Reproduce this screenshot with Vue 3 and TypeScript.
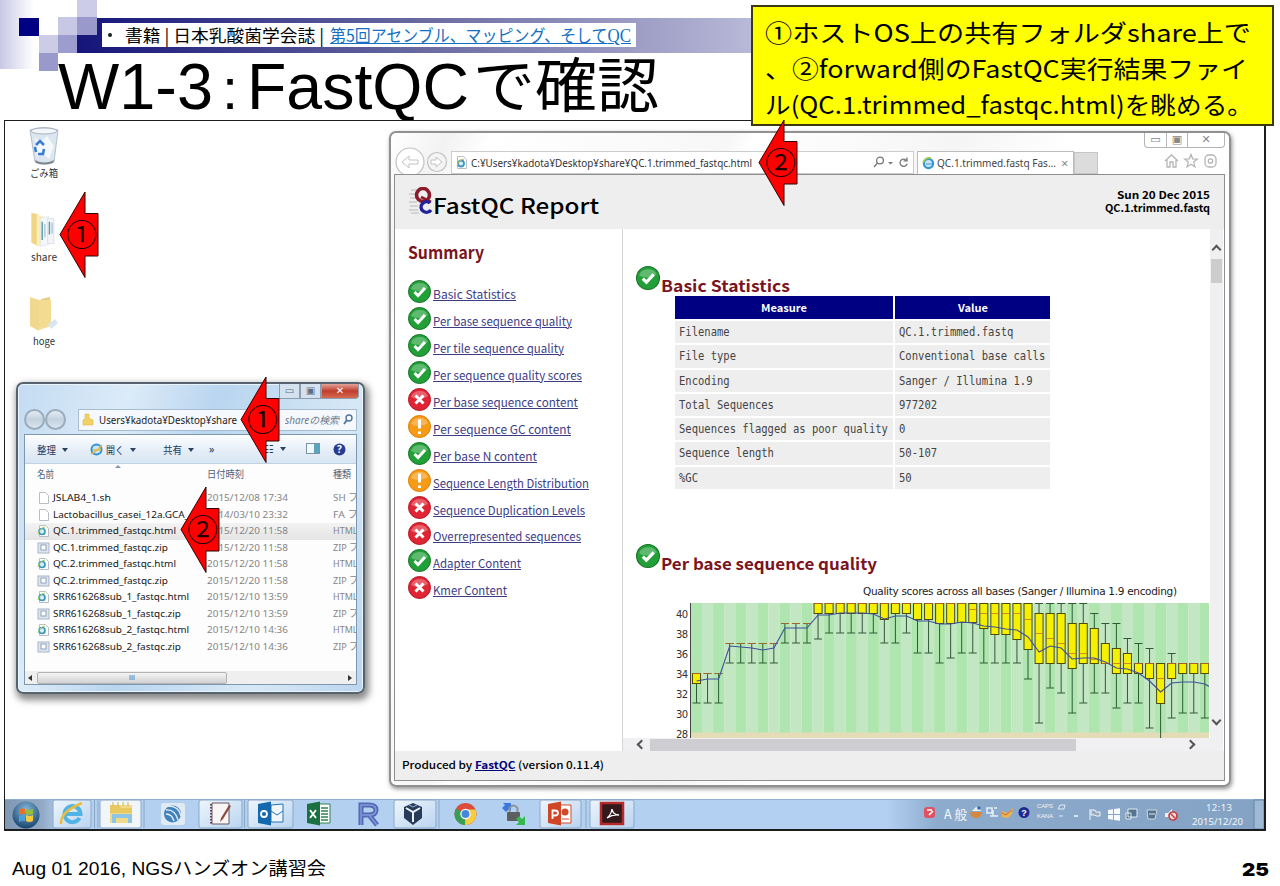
<script setup lang="ts">
import type { Directive } from 'vue'

// Stretches or condenses a line of text to the given width in pixels.
const vFit: Directive<HTMLElement, number> = {
  mounted(el, binding) {
    const natural = el.getBoundingClientRect().width
    if (!natural) return
    el.style.transform = `scaleX(${binding.value / natural})`
    el.style.marginRight = `${binding.value - natural}px`
  },
}

type Status = 'pass' | 'fail' | 'warn'
interface Check { label: string; status: Status; width: number }
interface FileRow { name: string; kind: 'doc' | 'html' | 'zip'; date: string; type: string; width: number }

const checks: Check[] = [
  { label: 'Basic Statistics', status: 'pass', width: 83 },
  { label: 'Per base sequence quality', status: 'pass', width: 139 },
  { label: 'Per tile sequence quality', status: 'pass', width: 131 },
  { label: 'Per sequence quality scores', status: 'pass', width: 149 },
  { label: 'Per base sequence content', status: 'fail', width: 145 },
  { label: 'Per sequence GC content', status: 'warn', width: 138 },
  { label: 'Per base N content', status: 'pass', width: 104 },
  { label: 'Sequence Length Distribution', status: 'warn', width: 156 },
  { label: 'Sequence Duplication Levels', status: 'fail', width: 152 },
  { label: 'Overrepresented sequences', status: 'fail', width: 148 },
  { label: 'Adapter Content', status: 'pass', width: 88 },
  { label: 'Kmer Content', status: 'fail', width: 74 },
]

const stats: [string, string][] = [
  ['Filename', 'QC.1.trimmed.fastq'],
  ['File type', 'Conventional base calls'],
  ['Encoding', 'Sanger / Illumina 1.9'],
  ['Total Sequences', '977202'],
  ['Sequences flagged as poor quality', '0'],
  ['Sequence length', '50-107'],
  ['%GC', '50'],
]

const files: FileRow[] = [
  { name: 'JSLAB4_1.sh', kind: 'doc', date: '2015/12/08 17:34', type: 'SH フ', width: 58 },
  { name: 'Lactobacillus_casei_12a.GCA_', kind: 'doc', date: '2014/03/10 23:32', type: 'FA フ', width: 136 },
  { name: 'QC.1.trimmed_fastqc.html', kind: 'html', date: '2015/12/20 11:58', type: 'HTML', width: 123 },
  { name: 'QC.1.trimmed_fastqc.zip', kind: 'zip', date: '2015/12/20 11:58', type: 'ZIP フ', width: 115 },
  { name: 'QC.2.trimmed_fastqc.html', kind: 'html', date: '2015/12/20 11:58', type: 'HTML', width: 123 },
  { name: 'QC.2.trimmed_fastqc.zip', kind: 'zip', date: '2015/12/20 11:58', type: 'ZIP フ', width: 115 },
  { name: 'SRR616268sub_1_fastqc.html', kind: 'html', date: '2015/12/10 13:59', type: 'HTML', width: 136 },
  { name: 'SRR616268sub_1_fastqc.zip', kind: 'zip', date: '2015/12/10 13:59', type: 'ZIP フ', width: 128 },
  { name: 'SRR616268sub_2_fastqc.html', kind: 'html', date: '2015/12/10 14:36', type: 'HTML', width: 136 },
  { name: 'SRR616268sub_2_fastqc.zip', kind: 'zip', date: '2015/12/10 14:36', type: 'ZIP フ', width: 128 },
]

// upper whisker, q3, q1, lower whisker, mean, median
const raw: number[][] = [
  [34, 34, 33, 31, 33.2, 34], [34, 34, 34, 31, 33.4, 34], [34, 34, 34, 31, 33.4, 34],
  [37, 37, 37, 35, 36.7, 37], [37, 37, 37, 35, 36.6, 37], [37, 37, 37, 35, 36.5, 37], [37, 37, 37, 35, 36.3, 37], [37, 37, 37, 35, 36.5, 37],
  [39, 39, 39, 37, 38.5, 39], [39, 39, 39, 37, 38.5, 39], [39, 39, 39, 37, 38.5, 39],
  [41, 41, 40, 37.4, 39.8, 41], [41, 41, 40, 38, 39.8, 41], [41, 41, 40, 38, 40, 41], [41, 41, 40, 38, 40, 41], [41, 41, 40, 38, 40, 41], [41, 41, 40, 38, 39.9, 41],
  [41, 41, 39.4, 37, 39.4, 41], [41, 41, 40, 37, 39.7, 41], [41, 41, 40, 38, 39.7, 41], [41, 41, 39.4, 36, 39.2, 41], [41, 41, 39.4, 36, 39.2, 41],
  [41, 41, 39, 35, 38.9, 41], [41, 41, 39, 35.5, 38.9, 41], [41, 41, 39.1, 36, 39.1, 41], [41, 41, 39.1, 36, 39, 40.4],
  [41, 41, 38.5, 35, 38.7, 40], [41, 41, 37.9, 35, 38.6, 40], [41, 41, 37.9, 35, 38.4, 40], [41, 41, 37.4, 35, 38.3, 40], [41, 41, 36.4, 33.4, 37.6, 39.4],
  [41, 40, 35, 29, 36.1, 38], [41, 40, 35, 32.5, 36.7, 37.5], [41, 40, 35, 32, 36.5, 37], [41, 39, 34.5, 30, 35.4, 36], [41, 39, 35, 31, 35.5, 36],
  [40, 38.5, 35, 32, 35.5, 35.4], [39, 37, 35, 32, 35.1, 35], [39, 36.5, 34, 30.5, 34.5, 35], [37.5, 36, 34, 31, 34.4, 35],
  [37, 35, 34, 31, 34, 35], [36.5, 35, 33.5, 28.5, 33.2, 35], [35, 35, 31, 27, 32.1, 33.5], [36, 35, 33.5, 29.5, 33, 35],
  [35, 35, 34, 30, 33.1, 35], [35, 35, 34, 30, 33.1, 35], [35, 35, 34, 29.5, 32.9, 35],
]
const pitch = 11.05
const yOf = (v: number): number => (41 - v) * 10
const boxes = raw.map(([hi, q3, q1, lo, mean, med], i) => ({
  x: 5.5 + i * pitch, hi: yOf(hi), q3: yOf(q3), q1: yOf(q1), lo: yOf(lo), mean: yOf(mean), med: yOf(med),
}))
const meanLine = boxes.map((b) => `${b.x.toFixed(1)},${b.mean.toFixed(1)}`).join(' ') + ' 518,83.5'
const ticks = [40, 38, 36, 34, 32, 30, 28]

const calloutLines: [string, number][] = [
  ['①ホストOS上の共有フォルダshare上で', 486],
  ['、②forward側のFastQC実行結果ファイ', 483],
  ['ル(QC.1.trimmed_fastqc.html)を眺める。', 488],
]
const markers = [
  { id: 'm-desktop', n: '①' }, { id: 'm-path', n: '①' }, { id: 'm-file', n: '②' }, { id: 'm-url', n: '②' },
]
</script>

<template>
  <div class="slide">
    <svg class="deco" width="1280" height="75" viewBox="0 0 1280 75">
      <defs>
        <linearGradient id="bar"><stop offset="0" stop-color="#14147a" /><stop offset=".28" stop-color="#6868a0" /><stop offset=".56" stop-color="#b8b8d8" /><stop offset="1" stop-color="#fff" /></linearGradient>
        <linearGradient id="side"><stop offset="0" stop-color="#c8c8e6" /><stop offset="1" stop-color="#fff" /></linearGradient>
      </defs>
      <rect width="34" height="69" fill="url(#side)" />
      <rect x="77" y="18" width="1203" height="35" fill="url(#bar)" />
      <rect x="19" y="18" width="20" height="18" fill="#000082" />
      <rect x="39" y="35" width="19" height="18" fill="#ccccE6" />
      <rect x="39" y="53" width="19" height="18" fill="#9999cc" />
      <rect x="58" y="17" width="19" height="18" fill="#c8c8e4" />
      <rect x="58" y="35" width="19" height="18" fill="#9c9ccf" />
      <rect x="77" y="0" width="20" height="18" fill="#cccce8" />
      <rect x="77" y="17" width="20" height="18" fill="#9999cc" />
    </svg>

    <nav class="source">
      <i class="dot"></i>
      <span v-fit="199">書籍 | 日本乳酸菌学会誌 |</span>
      <a v-fit="301">第5回アセンブル、マッピング、そして<em>QC</em></a>
    </nav>
    <h1 class="title">
      <span v-fit="155">W1-3</span><b>:</b><span v-fit="222">FastQC</span><span class="ja" v-fit="186">で確認</span>
    </h1>

    <main class="desktop">
      <div class="shortcuts">
        <div class="shortcut">
          <svg width="32" height="38" viewBox="0 0 32 38">
            <path d="M2 3 Q16 -2 30 3 L26 35 Q16 39 7 35Z" fill="#dce6f0" stroke="#b4bfca" />
            <ellipse cx="16" cy="4" rx="13" ry="3" fill="#f4f7fa" stroke="#aab4be" />
            <path d="M7 10l5 6 7-7 7 10-5 13-8-7-4 5z" fill="#f6f9fc" opacity=".9" />
            <path d="M8 18l4-4 4 4M16 22l-1 5h-5M8 25l-1-5" fill="none" stroke="#3b7cd0" stroke-width="2.6" />
            <path d="M7 33q9 5 19 0l-1 3q-9 3-17 0z" fill="#7d8892" />
          </svg>
          <span v-fit="28">ごみ箱</span>
        </div>
        <div class="shortcut">
          <svg width="32" height="42" viewBox="0 0 32 42">
            <path d="M2 2l8 2v35l-8-4z" fill="#f0d684" /><path d="M8 4l8 2v32l-8 1z" fill="#fbeebb" />
            <path d="M12 8l9-2v31l-9 2z" fill="#f4f8fb" stroke="#d2dde5" stroke-width=".6" /><path d="M20 8h7v28h-7z" fill="#f2f4f8" stroke="#c9d2dc" stroke-width=".6" />
            <path d="M14 12v20M22 12v14" stroke="#5b9f9d" stroke-width="1.6" /><path d="M17 14v15M25 13v12" stroke="#afc5e2" stroke-width="1.6" />
          </svg>
          <span v-fit="26">share</span>
        </div>
        <div class="shortcut">
          <svg width="32" height="38" viewBox="0 0 32 38">
            <path d="M13 4l9-2v27l-9 3z" fill="#e9cf7e" /><path d="M2 2l9 3v31l-9-5z" fill="#f0d98e" /><path d="M11 5l12 0v26l-12 4z" fill="#f3dc92" />
            <path d="M20 29l7-5 3 4-7 6z" fill="#d8e6f2" />
          </svg>
          <span v-fit="22">hoge</span>
        </div>
      </div>

      <section class="explorer">
        <div class="caption"><i class="min">▭</i><i class="max">▣</i><i class="close">✕</i></div>
        <div class="address">
          <i class="round"></i><i class="round"></i>
          <div class="path">
            <svg width="12" height="13" viewBox="0 0 12 13"><path d="M3 1h4v4l4 2v5H1V7l2-1z" fill="#f3d063" stroke="#dcb84f" stroke-width=".6" /></svg>
            <span v-fit="138">Users¥kadota¥Desktop¥share</span>
          </div>
          <div class="search"><span v-fit="54">shareの検索</span>
            <svg width="10" height="12" viewBox="0 0 10 12"><circle cx="6" cy="4" r="3" fill="none" stroke="#52759b" stroke-width="1.4" /><path d="M4 6L1 10" stroke="#52759b" stroke-width="1.8" /></svg>
          </div>
        </div>
        <div class="pane">
          <div class="tools">
            <span class="t1"><span v-fit="19">整理</span><i></i></span>
            <svg class="t2" width="13" height="13" viewBox="0 0 13 13"><circle cx="6.5" cy="6.5" r="5" fill="#cbe6fa" stroke="#3294d3" stroke-width="2" /><path d="M3 7h8M1 11Q6 9 12 2" stroke="#e1b94b" stroke-width="1.4" fill="none" /></svg>
            <span class="t3"><span v-fit="18">開く</span><i></i></span>
            <span class="t4"><span v-fit="19">共有</span><i></i></span>
            <span class="t5">»</span>
            <span class="t6">☷<i></i></span>
            <svg class="t7" width="14" height="12" viewBox="0 0 14 12"><rect x=".5" y=".5" width="13" height="10" fill="#f2f8fc" stroke="#7c93a6" /><rect x="8" y="1" width="5" height="9" fill="#5ca3bd" /></svg>
            <svg class="t8" width="13" height="13" viewBox="0 0 13 13"><circle cx="6.5" cy="6.5" r="6" fill="#293c91" /><text x="6.5" y="10" text-anchor="middle" font-size="10" font-weight="bold" fill="#fff">?</text></svg>
          </div>
          <div class="cols head"><span><span v-fit="17">名前</span></span><span><span v-fit="37">日付時刻</span></span><span><span v-fit="18">種類</span></span><i class="sort"></i></div>
          <div v-for="(f, i) in files" :key="f.name" class="cols row" :class="{ sel: i === 2 }">
            <span class="name">
              <svg width="13" height="12" viewBox="0 0 13 12">
                <path v-if="f.kind !== 'zip'" d="M2.5.5h6l3 3v8h-9z" fill="#fff" stroke="#b9bec4" />
                <template v-if="f.kind === 'html'"><circle cx="5" cy="6.5" r="3" fill="#d7eefa" stroke="#3d98bd" stroke-width="1.7" /><path d="M1 9Q3 3 8 2" stroke="#a8cc58" fill="none" /></template>
                <template v-if="f.kind === 'zip'"><rect x="1" y="1" width="11" height="10" fill="#dfe5ee" stroke="#a9b5c9" /><rect x="4" y="3" width="5" height="5" fill="#fff" stroke="#8ea2bf" /></template>
              </svg>
              <span v-fit="f.width">{{ f.name }}</span>
            </span>
            <span class="date"><span v-fit="81">{{ f.date }}</span></span>
            <span class="type"><span v-fit="f.type === 'HTML' ? 24.5 : 25">{{ f.type }}</span></span>
          </div>
          <div class="hscroll"><i class="al"></i><b>III</b><i class="ar"></i></div>
        </div>
      </section>

      <section class="browser">
        <div class="wbtns"><i>▭</i><i>▣</i><i>✕</i></div>
        <div class="bar">
          <svg class="nav" width="61" height="30" viewBox="0 0 61 30" fill="none" stroke="#c2c2c2">
            <circle cx="19" cy="15" r="14" fill="#fff" stroke-width="1.2" /><path d="M27 13v4h-9v4l-7-6 7-6v4z" fill="#fff" />
            <circle cx="46" cy="15" r="9.5" fill="#f4f4f4" stroke-width="1.2" /><path d="M40 13v4h5v3l6-5-6-5v3z" fill="#fff" />
          </svg>
          <div class="url">
            <svg width="14" height="14" viewBox="0 0 14 14"><path d="M2.5.5h6l3 3v9h-9z" fill="#fff" stroke="#b9bec4" /><circle cx="6" cy="7.5" r="3" fill="#d7eefa" stroke="#3d98bd" stroke-width="1.8" /><path d="M2 10Q3 4 9 3" stroke="#d8b84c" fill="none" /></svg>
            <span v-fit="281">C:¥Users¥kadota¥Desktop¥share¥QC.1.trimmed_fastqc.html</span>
            <svg class="ops" width="38" height="13" viewBox="0 0 38 13" fill="none" stroke="#777" stroke-width="1.3"><circle cx="8" cy="4.5" r="3.4" /><path d="M5.5 7L2 11" /><path d="M16 6h5l-2.5 2.5z" fill="#777" stroke="none" /><path d="M34.5 4.5a3.6 3.6 0 1 0 .6 3.3M35 1.5v3.4h-3.4" /></svg>
          </div>
          <div class="tab">
            <svg width="13" height="13" viewBox="0 0 13 13"><circle cx="6.5" cy="6.5" r="4.6" fill="#cbe6fa" stroke="#3298d3" stroke-width="2.2" /><path d="M4 7h7" stroke="#3298d3" /><path d="M1 6Q3 0 9 1" stroke="#9ccb4a" stroke-width="1.6" fill="none" /></svg>
            <span v-fit="119">QC.1.trimmed.fastq Fas...</span><i>×</i>
          </div>
          <div class="newtab"></div>
          <svg class="home" width="54" height="16" viewBox="0 0 54 16" fill="none" stroke="#b5b5b5" stroke-width="1.3"><path d="M1 8l6.500-6L14 8M3 7v7h3V9h3v5h3V7" /><path d="M27 1.500l1.700 4.300 4.600.3-3.600 3 1.200 4.600-3.900-2.500-3.900 2.500 1.200-4.600-3.600-3 4.600-.3z" /><rect x="41" y="2" width="11" height="12" rx="4" /><circle cx="46.500" cy="8" r="2.200" /></svg>
        </div>

        <div class="page">
          <header class="phead">
            <svg width="26" height="28" viewBox="0 0 26 28"><path d="M2 3h9M0 7h8M1 11h8M0 15h8M1 19h8M0 23h9M2 26h8" stroke="#aaa" stroke-width=".8" /><ellipse cx="14" cy="8" rx="6.500" ry="6.500" fill="none" stroke="#8c1a2a" stroke-width="3.6" /><path d="M12 10l10 5" stroke="#8c1a2a" stroke-width="2.600" /><path d="M21 16a5.500 5.200 0 1 0 1 7" fill="none" stroke="#22239c" stroke-width="3.400" /></svg>
            <span class="brand"><span v-fit="166">FastQC Report</span></span>
            <div class="stamp"><span v-fit="93">Sun 20 Dec 2015</span><br /><span v-fit="105">QC.1.trimmed.fastq</span></div>
          </header>
          <div class="body">
            <aside>
              <h2><span v-fit="76">Summary</span></h2>
              <ul>
                <li v-for="c in checks" :key="c.label">
                  <svg width="23" height="23" viewBox="0 0 23 23">
                    <circle cx="11.500" cy="11.500" r="11" :class="c.status" />
                    <path d="M3 9a9 8 0 0 1 17-1q-4 3-9 3t-8-2z" fill="#fff" opacity=".28" />
                    <path v-if="c.status === 'pass'" d="M6.500 12l3.500 3.500L17 8" class="sign" />
                    <path v-else-if="c.status === 'fail'" d="M7.500 7.500l8 8M15.500 7.500l-8 8" class="sign" />
                    <path v-else d="M11.500 4.500v9M11.500 16.500v2.500" class="sign" />
                  </svg>
                  <a v-fit="c.width">{{ c.label }}</a>
                </li>
              </ul>
            </aside>
            <div class="report">
              <div class="view">
                <h2 class="h-a">
                  <svg width="24" height="24" viewBox="0 0 23 23"><circle cx="11.500" cy="11.500" r="11" class="pass" /><path d="M3 9a9 8 0 0 1 17-1q-4 3-9 3t-8-2z" fill="#fff" opacity=".28" /><path d="M6.500 12l3.500 3.500L17 8" class="sign" /></svg>
                  <span v-fit="129">Basic Statistics</span>
                </h2>
                <div class="table">
                  <b><span v-fit="46">Measure</span></b><b><span v-fit="30">Value</span></b>
                  <template v-for="s in stats" :key="s[0]">
                    <span><span v-fit="s[0].length * 6.33">{{ s[0] }}</span></span><span><span v-fit="s[1].length * 6.36">{{ s[1] }}</span></span>
                  </template>
                </div>
                <h2 class="h-b">
                  <svg width="24" height="24" viewBox="0 0 23 23"><circle cx="11.500" cy="11.500" r="11" class="pass" /><path d="M3 9a9 8 0 0 1 17-1q-4 3-9 3t-8-2z" fill="#fff" opacity=".28" /><path d="M6.500 12l3.500 3.500L17 8" class="sign" /></svg>
                  <span v-fit="216">Per base sequence quality</span>
                </h2>
                <svg class="chart" width="586" height="153" viewBox="-68 -18 586 153">
                  <text x="172" y="-8" textLength="314" class="ctitle">Quality scores across all bases (Sanger / Illumina 1.9 encoding)</text>
                  <rect v-for="(b, i) in boxes" :key="'s' + i" :x="i * pitch" y="0" :width="pitch + 0.1" height="130" :fill="i % 2 ? '#c3e6c3' : '#afe6af'" />
                  <rect x="0" y="129.500" width="519" height="6" fill="#e4dcb6" />
                  <path d="M-.5 0V135" stroke="#444" />
                  <text v-for="t in ticks" :key="t" x="-3" :y="yOf(t) + 4.5" textLength="12" text-anchor="end" class="tick">{{ t }}</text>
                  <g v-for="(b, i) in boxes" :key="'b' + i">
                    <path :d="`M${b.x} ${b.hi}V${b.lo}M${b.x - 4} ${b.hi + 0.5}h8M${b.x - 4} ${b.lo}h8`" stroke="#2e5a35" fill="none" />
                    <rect v-if="b.q1 > b.q3" :x="b.x - 4" :y="b.q3 + 0.5" width="8" :height="b.q1 - b.q3" fill="#f4f000" stroke="#4f4b0c" />
                    <path :d="`M${b.x - 4} ${b.med + 0.5}h8`" stroke="#c8682a" stroke-opacity=".75" />
                  </g>
                  <polyline :points="meanLine" fill="none" stroke="#3f4f9e" stroke-width="1.1" />
                </svg>
                <div class="hbar"><i class="chev l"></i><i class="thumb"></i><i class="chev r"></i></div>
              </div>
              <div class="vbar"><i class="chev u"></i><i class="vthumb"></i><i class="chev d"></i></div>
            </div>
          </div>
          <footer class="pfoot"><span v-fit="202">Produced by <a>FastQC</a> (version 0.11.4)</span></footer>
        </div>
      </section>

      <svg class="taskbar" width="1259" height="30" viewBox="5 799 1259 30">
        <defs>
          <linearGradient id="tb"><stop offset="0" stop-color="#8198b4" /><stop offset=".03" stop-color="#92aac6" /><stop offset=".045" stop-color="#b4d0f0" /><stop offset=".7" stop-color="#b3d0f2" /><stop offset=".74" stop-color="#8daccd" /><stop offset="1" stop-color="#84a3c4" /></linearGradient>
          <linearGradient id="btn" x1="0" x2="1" y1="0" y2="1"><stop offset="0" stop-color="#eef5fc" /><stop offset="1" stop-color="#bad4f0" /></linearGradient>
          <radialGradient id="orb" cx=".5" cy=".3" r=".7"><stop offset="0" stop-color="#86b8d8" /><stop offset="1" stop-color="#19456f" /></radialGradient>
        </defs>
        <rect x="5" y="799" width="1259" height="30" fill="url(#tb)" />
        <path d="M5 799.500H1264" stroke="#8fb0d4" />
        <g fill="url(#btn)" stroke="#8aa7c8"><rect x="53" y="800" width="38" height="28" rx="2" /><path d="M94.500 800v28M98 800v28M144 800v28M244.500 800v28M439 800v28M586 800v28" /><rect x="100" y="800" width="41" height="28" rx="2" fill="#f1f6fa" /><rect x="199" y="800" width="43" height="28" rx="2" /><rect x="248" y="800" width="45" height="28" rx="2" /><rect x="394" y="800" width="42" height="28" rx="2" /><rect x="540" y="800" width="41" height="28" rx="2" /><rect x="590" y="800" width="44" height="28" rx="2" /></g>
        <circle cx="26" cy="815" r="13.500" fill="url(#orb)" />
        <path d="M19 810q3-3 6-1v5q-3-1-6 1z" fill="#e8702c" /><path d="M26 809q4 2 7 0v5q-4 2-7 0z" fill="#92bf3c" /><path d="M19 816q3-2 6-1v6q-3-1-6 1z" fill="#4aa0dc" /><path d="M26 815q4 2 7 0v6q-4 2-7 0z" fill="#f3cb3d" />
        <path d="M79.500 818a8 8 0 1 1 1-4h-15" fill="none" stroke="#52b4e5" stroke-width="4" /><path d="M61 824Q60 812 82 803" fill="none" stroke="#e9bd3f" stroke-width="2.500" />
        <path d="M110 805h22v18h-22z" fill="#f1d98a" /><path d="M110 805h9l2 3h11v5h-22z" fill="#e8c95f" /><path d="M112 823v-9h20v9h-4v-5h-12v5z" fill="#8ec5e6" /><path d="M113 802v4M118 802v4M123 802v4M128 802v4" stroke="#d4b04a" />
        <rect x="161" y="803" width="24" height="22" rx="3" fill="#dfeaf3" /><circle cx="172.500" cy="814" r="8.500" fill="#4282ba" /><g fill="none" stroke="#e6f0f8" stroke-width="1.400"><path d="M166 810q9-1 12 10M166 814q6 0 8 7M168 806q11 0 13 10" /></g>
        <path d="M212 803h17v21h-17z" fill="#f8f6f4" stroke="#665966" /><path d="M211 804v20" stroke="#654458" stroke-width="2" stroke-dasharray="1.500 1.500" /><path d="M229 805l2 1-8 13-3 3 1-4z" fill="#8b4b44" />
        <path d="M271 805l12-1v18h-12z" fill="#f1f6fa" stroke="#2374b5" /><path d="M271 811l6 4 6-4" fill="none" stroke="#2374b5" /><path d="M258 804l13-2.500v24l-13-2.500z" fill="#1368ae" /><circle cx="264" cy="814" r="3" fill="none" stroke="#fff" stroke-width="1.800" />
        <path d="M317 804h13v19h-13z" fill="#fff" stroke="#32824f" /><path d="M321 808h7M321 811h7M321 814h7M321 817h7M321 820h7" stroke="#32824f" stroke-width="1.600" /><path d="M307 804l13-2.500v24l-13-2.500z" fill="#1a7040" /><path d="M310 810l6 8M316 810l-6 8" stroke="#fff" stroke-width="1.800" />
        <path d="M361 825V805h8q7 0 7 5t-7 5h-7M369 815l8 10" fill="none" stroke="#5269b5" stroke-width="5" /><path d="M361 825V805h8q7 0 7 5t-7 5h-7M369 815l8 10" fill="none" stroke="#8598d8" stroke-width="1.500" />
        <path d="M413 803l9 4v11l-9 7-9-7v-11z" fill="#283c5a" /><path d="M406 808l7 4 7-4M413 812v10" stroke="#eaf3fa" stroke-width="2" fill="none" /><path d="M409 805l4 2 4-2" stroke="#94b4d4" fill="none" />
        <circle cx="465.500" cy="814" r="11" fill="#dc4b3c" /><path d="M465.500 814L456 808.500A11 11 0 0 0 465 825z" fill="#379f54" /><path d="M465.500 814l-.5 11a11 11 0 0 0 10.500-15.500h-10z" fill="#f4cd42" /><circle cx="465.500" cy="814" r="5.200" fill="#fff" /><circle cx="465.500" cy="814" r="4" fill="#4886dc" />
        <path d="M502 808l3-3-2-2h8v8l-2-2-3 3z" fill="#3978e1" /><rect x="507" y="812" width="13" height="9" rx="1" fill="#5d5e60" /><path d="M509.500 812v-4q4-5 8 0v4" fill="none" stroke="#8d9197" stroke-width="2" /><path d="M516 819l3-3 3 3 3-3v9h-9l3-3z" fill="#35b94a" />
        <path d="M560 805h11v18h-11z" fill="#fff" stroke="#cf4a2a" /><circle cx="565" cy="812" r="3.500" fill="#cf4a2a" /><path d="M562 819h7" stroke="#cf4a2a" /><path d="M548 804l13-2.500v24l-13-2.500z" fill="#cf4525" /><path d="M552.500 819v-8.500h2.500q3 0 3 2.500t-3 2.500h-2" fill="none" stroke="#fff" stroke-width="1.800" />
        <rect x="601" y="803" width="22" height="21" fill="#33191b" stroke="#b52a2a" stroke-width="2.500" /><path d="M607 818q4-3 5-9 1 6 7 6-6-1-12 3z" fill="none" stroke="#fff" stroke-width="1.300" />
        <rect x="924" y="807" width="11" height="11" rx="3" fill="#df5263" /><path d="M927 810h5M929 815l4-4" stroke="#fff" stroke-width="1.600" />
        <text x="944" y="819" class="ime" textLength="23" lengthAdjust="spacingAndGlyphs">A 般</text>
        <path d="M970 812h12q-1 6-6 6t-6-6z" fill="#d9863d" /><path d="M972 811l4-4 4 1 1 3z" fill="#eceee9" /><circle cx="979" cy="808" r="1.800" fill="#2e70bb" />
        <path d="M987 808h5v5h-5zM994 808h3M990 816h8M993 810v6" stroke="#e6f0f8" stroke-width="1.500" fill="none" />
        <path d="M1002 811l5 2 6-5-1 6-4 4-6-1z" fill="#ebb44d" /><path d="M1002 813l4 2 6-5" stroke="#d9603c" fill="none" />
        <circle cx="1024" cy="812.500" r="5.500" fill="#1c2b91" /><text x="1024" y="816" class="q">?</text>
        <text x="1037" y="808" class="caps" textLength="16">CAPS</text><text x="1037" y="818" class="caps" textLength="16">KANA</text>
        <path d="M1058 809l2-4h5l-1 4zM1059 816h4" stroke="#e0ebf5" fill="none" /><path d="M1074 816h4" stroke="#f1f6fa" stroke-width="1.500" />
        <path d="M1090 820v-11M1091 810h4l1 2h4v4h-4l-1-1h-4z" stroke="#eef4f9" fill="#9cabbc" />
        <path d="M1108 810l5-.7v4.700h-5zM1114 809l6-.8v5.800h-6zM1108 815h5v4.700l-5-.7zM1114 815h6v5.800l-6-.8z" fill="#f5fafd" />
        <path d="M1128 809h9v8h-9zM1126 813h5v6h-5z" fill="#56738f" stroke="#e0ecf4" /><path d="M1147 810h10l-2 9h-7z" fill="#557389" stroke="#ccd9e2" /><path d="M1149 814h6" stroke="#e2edf5" />
        <path d="M1165 813h3l4-4v12l-4-4h-3z" fill="#ecf2f7" /><circle cx="1173" cy="816" r="4" fill="#f4dede" stroke="#c43e45" stroke-width="1.700" /><path d="M1170.500 813.500l5 5" stroke="#c43e45" stroke-width="1.500" />
        <text x="1206" y="811" class="clock" textLength="26">12:13</text><text x="1192" y="825" class="clock" textLength="51">2015/12/20</text>
        <rect x="1254" y="800" width="10" height="29" fill="#9eb9d6" stroke="#6585a8" />
      </svg>
    </main>

    <div class="callout"><p v-for="l in calloutLines" :key="l[0]"><span v-fit="l[1]">{{ l[0] }}</span></p></div>

    <div v-for="m in markers" :key="m.id" class="marker" :class="m.id">
      <svg width="40" height="87" viewBox="-1 -1 40 87"><path d="M0 42.500L25 0V21.500H38V64H25V85.500Z" fill="#f00" stroke="#300" stroke-width="1" /></svg>
      <span>{{ m.n }}</span>
    </div>

    <footer class="foot"><span v-fit="314">Aug 01 2016, NGSハンズオン講習会</span><b v-fit="27">25</b></footer>
  </div>
</template>

<style>
html, body { background: #fff; overflow: hidden; }
</style>

<style scoped>
.slide { position: relative; width: 1280px; height: 886px; overflow: hidden; background: #fff; color: #000; font-family: "Liberation Sans", "Noto Sans CJK JP", sans-serif; }
.slide * { box-sizing: border-box; }
.slide span, .slide a, .foot b { white-space: pre; transform-origin: 0 50%; }
.slide span > span, .source span, .source > a, .title > span, .shortcut span, .path span, .search span, .url span, .tab span, .stamp span, li a, h2 span, .callout span, .pfoot > span, .foot > * { display: inline-block; }
i { font-style: normal; }
svg { flex: none; }
.deco { position: absolute; left: 0; top: 0; }
.source { position: absolute; left: 102px; top: 23px; width: 534px; height: 24px; background: #fff; display: flex; align-items: center; padding-left: 6px; font: 17px/24px "Noto Sans CJK JP", sans-serif; }
.source .dot { width: 4px; height: 4px; border-radius: 50%; background: #122; margin-right: 13px; }
.source a { color: #1470c4; text-decoration: underline; }
.source > a { margin-left: 6px; }
.source em { font: 18px "Liberation Serif", serif; }
.title { position: absolute; left: 58px; top: 49px; margin: 0; display: flex; font-weight: 400; font-size: 65px; line-height: 76px; height: 76px; white-space: nowrap; }
.title b { width: 34px; font-weight: 400; font-size: 58px; line-height: 79px; text-align: center; }
.title .ja { font-family: "Noto Sans CJK JP", sans-serif; font-size: 59px; line-height: 66px; margin-left: 4px; }

.desktop { position: absolute; left: 4px; top: 120px; width: 1262px; height: 711px; border: 2px solid #1c1c1c; border-width: 1px 2px 2px 1px; background: #fff; }
.shortcuts { position: absolute; left: 19px; top: 6px; width: 40px; display: flex; flex-direction: column; font: 10px/12px "Noto Sans CJK JP", sans-serif; color: #333; }
.shortcut { height: 84px; display: flex; flex-direction: column; align-items: center; justify-content: flex-start; }
.shortcut svg { height: 38px; margin-bottom: 2px; }

.explorer { position: absolute; left: 11px; top: 261px; width: 349px; height: 312px; padding: 0 6px 7px; display: flex; flex-direction: column; border: 2px solid #56626e; border-radius: 7px; background: linear-gradient(110deg, #c3dbf2, #dcebf8 25%, #b9d5ef 45%, #d6e8f6 75%, #bcd6ee); box-shadow: 2px 4px 7px 2px rgba(60, 60, 60, .6), inset 0 0 0 1px #eaf4fd; font-family: "Noto Sans", "Noto Sans CJK JP", sans-serif; }
.caption { height: 17px; display: flex; justify-content: flex-end; margin-right: -2px; }
.caption i { width: 21px; height: 15px; border: 1px solid #8b9dae; border-top: 0; font: 10px/14px "DejaVu Sans", sans-serif; text-align: center; color: #5a6f84; background: #d4e2ef; }
.caption .close { width: 38px; color: #fff; background: linear-gradient(#e4a498, #bf3e2e 50%, #d66a50); border-radius: 0 0 4px; }
.address { height: 33px; display: flex; align-items: center; padding: 6px 0 2px 0; }
.round { width: 21px; height: 21px; border-radius: 50%; border: 2px solid #9aabba; background: linear-gradient(#e4ecf3, #c4d2df 50%, #d7e5f1); }
.path, .search { height: 22px; display: flex; align-items: center; background: #f5f9fd; border: 1px solid #a7bccf; font-size: 10px; line-height: 20px; }
.path { width: 198px; margin-left: 12px; padding-left: 3px; color: #222; }
.path span { margin-left: 5px; }
.search { width: 80px; margin-left: 3px; padding-left: 7px; color: #6d7986; font-style: italic; }
.search svg { margin-left: 4px; }
.pane { flex: 1; border: 1px solid #7e97b0; background: #fdfdfd; display: flex; flex-direction: column; overflow: hidden; }
.tools { height: 29px; position: relative; display: grid; grid-template-columns: 53px 16px 57px 46px 40px 43px 28px 1fr; align-items: center; padding-left: 12px; background: linear-gradient(#fdfeff, #e3edf7 60%, #d8e6f3); border-bottom: 1px solid #c2d1df; font-size: 10.5px; color: #1f3b5e; }
.tools span i { display: inline-block; border: 3px solid transparent; border-top: 4px solid #2a4260; margin: 0 0 -1px 6px; }
.t6 { text-align: right; padding-right: 6px; }
.t7 { justify-self: end; } .t8 { justify-self: end; margin-right: 10px; }
.cols { display: grid; grid-template-columns: 170px 126px 1fr; padding-left: 12px; position: relative; white-space: nowrap; }
.head { height: 26px; line-height: 20px; font-size: 10px; color: #50627a; }
.sort { position: absolute; left: 90px; top: 1px; border: 3px solid transparent; border-bottom: 3px solid #7d97b4; border-top: 0; }
.row { height: 16.5px; line-height: 16px; font-size: 9.800px; color: #161616; }
.row.sel { background: linear-gradient(#f3f3f3, #e4e4e4); }
.name { display: flex; align-items: center; }
.name svg { margin-right: 3px; }
.date, .type { color: #858585; }
.hscroll { margin-top: auto; height: 13px; display: flex; align-items: center; background: #f0efef; }
.hscroll b { width: 190px; height: 12px; margin: 0 auto 0 5px; border: 1px solid #b3b3b3; border-radius: 2px; background: linear-gradient(#f4f4f4, #d2d2d4); font: 7px/10px "Liberation Sans", sans-serif; text-align: center; color: #555; }
.al { margin-left: 3px; border: 3px solid transparent; border-right: 4px solid #333; border-left: 0; }
.ar { margin-right: 4px; border: 3px solid transparent; border-left: 4px solid #333; border-right: 0; }

.browser { position: absolute; left: 384px; top: 10px; width: 842px; height: 656px; border: 2px solid #909090; border-radius: 7px; padding: 0 4px 4px 3px; display: flex; flex-direction: column; background: linear-gradient(115deg, #fff 0, #f2f2f2 5%, #fff 9%, #f7f7f7 30%, #fff 32%, #f5f5f5 50%, #fff 60%); box-shadow: 1px 2px 4px rgba(70, 70, 70, .6); }
.wbtns { position: absolute; right: 4px; top: 0; display: flex; border: 1px solid #b4b4b4; border-top: 0; border-radius: 0 0 4px 4px; background: #fff; font: 11px/14px "DejaVu Sans", sans-serif; color: #888; }
.wbtns i { width: 21px; height: 14px; text-align: center; } .wbtns i + i { border-left: 1px solid #bbb; } .wbtns i:last-child { width: 37px; }
.bar { height: 41px; display: flex; align-items: flex-end; flex: none; }
.nav { margin-bottom: -3px; margin-left: -3px; }
.url { width: 463px; height: 23px; margin-left: -1px; border: 1px solid #ccc; background: #fff; display: flex; align-items: center; padding-left: 3px; font: 10px/20px "Noto Sans", sans-serif; color: #333; }
.url span { margin-left: 2px; } .ops { margin-left: auto; margin-right: 3px; }
.tab { width: 157px; height: 23px; margin-left: 3px; border: 1px solid #bbb; border-bottom: 0; background: #fff; display: flex; align-items: center; padding-left: 4px; font: 11px/20px "Noto Sans", sans-serif; color: #444; }
.tab span { margin-left: 2px; } .tab i { margin-left: 5px; font-size: 13px; color: #888; }
.newtab { width: 24px; height: 22px; background: #dcdcdc; border: 1px solid #c6c6c6; }
.home { margin: 0 7px 5px auto; }
.page { width: 831px; flex: 1; border: 1px solid #8e8e8e; background: #fff; display: flex; flex-direction: column; min-height: 0; font-family: "Noto Sans CJK JP", sans-serif; }
.phead { height: 54px; background: #eee; display: flex; align-items: flex-start; padding: 12px 13px 0 14px; }
.brand { font-weight: 500; font-size: 21px; line-height: 36px; margin-left: -2px; }
.stamp { margin-left: auto; margin-top: 1px; width: 106px; text-align: left; font-weight: 700; font-size: 10.500px; line-height: 13px; }
.stamp span:first-child { margin-left: 12px; }
.body { flex: 1; display: flex; min-height: 0; }
aside { width: 228px; border-right: 1px solid #d4d4d4; padding: 12px 0 0 13px; }
h2 { margin: 0; font-size: 17px; font-weight: 700; color: #7a1420; line-height: 22px; }
ul { list-style: none; margin: 17px 0 0; padding: 0; }
li { height: 26.950px; display: flex; align-items: flex-start; }
li a { font-size: 12px; line-height: 20px; margin: 4px 0 0 2px; color: #3d3d86; text-decoration: underline; }
.pass { fill: #22a038; stroke: #187028; } .fail { fill: #e02434; stroke: #b01824; } .warn { fill: #f79a14; stroke: #d87c0c; }
.sign { fill: none; stroke: #fff; stroke-width: 3; }
.report { flex: 1; display: flex; min-width: 0; }
.view { width: 587px; display: flex; flex-direction: column; }
.view h2 { display: flex; align-items: flex-start; font-size: 16px; padding-left: 13px; height: 30px; flex: none; }
.h-a { margin-top: 37px; } .h-b { margin-top: 55px; }
.view h2 span { margin: 8px 0 0 1px; }
.table { display: grid; grid-template-columns: 218px 155px; grid-template-rows: 23px repeat(7, 22.300px); gap: 2px; width: 375px; margin: 0 0 0 52px; flex: none; }
.table b { background: #000082; color: #fff; font-size: 10.500px; font-weight: 700; display: flex; align-items: center; justify-content: center; line-height: 20px; }
.table b span { display: block; }
.table > span { background: #eee; padding-left: 4px; font: 13px/22px "DejaVu Sans Mono", "Liberation Mono", monospace; color: #444; }
.chart { display: block; flex: none; overflow: hidden; margin-top: auto; }
.ctitle { font: 10.500px "DejaVu Sans", sans-serif; fill: #222; }
.tick { font: 10px "DejaVu Sans", sans-serif; fill: #333; }
.hbar { height: 13px; flex: none; background: #f0f0f2; display: flex; align-items: center; }
.thumb { width: 426px; height: 12px; margin: 0 auto 0 5px; background: #cdcdd2; }
.chev { width: 7px; height: 7px; border: solid #555; border-width: 2px 2px 0 0; }
.chev.l { transform: rotate(-135deg); margin-left: 15px; } .chev.r { transform: rotate(45deg); margin-right: 16px; }
.vbar { width: 13px; background: #f0f0f2; display: flex; flex-direction: column; align-items: center; padding: 17px 0 27px; }
.chev.u { transform: rotate(-45deg); } .chev.d { transform: rotate(135deg); margin-top: auto; }
.vthumb { width: 11px; height: 24px; background: #cdcdcd; margin-top: 6px; }
.pfoot { height: 29px; background: #eee; padding: 3px 0 0 7px; font-size: 10.500px; font-weight: 500; line-height: 22px; }
.pfoot a { color: #00007c; font-weight: 700; text-decoration: underline; }
.taskbar { position: absolute; left: 0; bottom: 0; display: block; }
.ime { font: 13px "Noto Sans CJK JP", sans-serif; fill: #f4f8fb; }
.q { font: bold 9px "Liberation Sans", sans-serif; fill: #fff; text-anchor: middle; }
.caps { font: 6px "Liberation Sans", sans-serif; fill: #edf4fa; }
.clock { font: 9.500px "Noto Sans", sans-serif; fill: #f0f6fb; }

.callout { position: absolute; left: 751px; top: 5px; width: 523px; height: 121px; padding: 7px 0 0 12px; background: #ff0; border: 2px solid #3a3a10; }
.callout p { margin: 0; height: 36px; font: 24px/36px "Noto Sans CJK JP", sans-serif; }
.marker { position: absolute; width: 40px; height: 87px; }
.marker svg { display: block; }
.marker span { position: absolute; left: 7px; top: 22px; width: 32px; font: 31px/40px "Noto Sans CJK JP", sans-serif; color: #200; }
.m-desktop { left: 59px; top: 191px; }
.m-path { left: 240px; top: 376px; }
.m-file { left: 180px; top: 486px; }
.m-url { left: 758px; top: 119px; }
.foot { position: absolute; left: 12px; top: 856px; width: 1257px; height: 27px; display: flex; font-size: 18px; line-height: 27px; }
.foot b { font: 900 18px/27px Inter, "Liberation Sans", sans-serif; }
.foot > b { position: absolute; left: 1230px; }
</style>
